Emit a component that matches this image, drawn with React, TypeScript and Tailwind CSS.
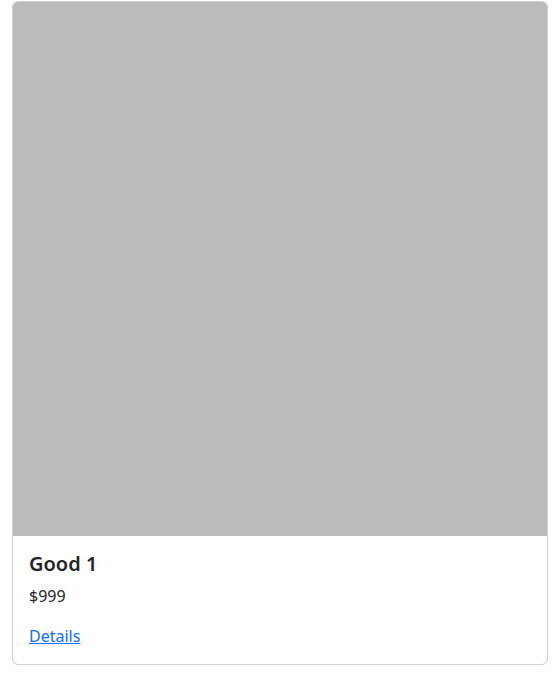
export default function App() {
  return (
    <div className="px-3 pt-px" style={{ fontFamily: '"Noto Sans", "Open Sans", sans-serif' }}>
      <div className="flex flex-col overflow-hidden rounded-[6px] border border-[rgba(0,0,0,0.175)] bg-white text-[#212529]">
        {/* image placeholder */}
        <div className="aspect-square w-full bg-[#bbbbbb]" />
        <div className="p-4">
          <h5 className="mb-2 text-[20px] leading-[24px] font-semibold">Good 1</h5>
          <p className="mb-4 text-[16px] leading-[24px]">$999</p>
          <a href="#" className="text-[16px] leading-[24px] text-[#0d6efd] underline">
            Details
          </a>
        </div>
      </div>
    </div>
  );
}
